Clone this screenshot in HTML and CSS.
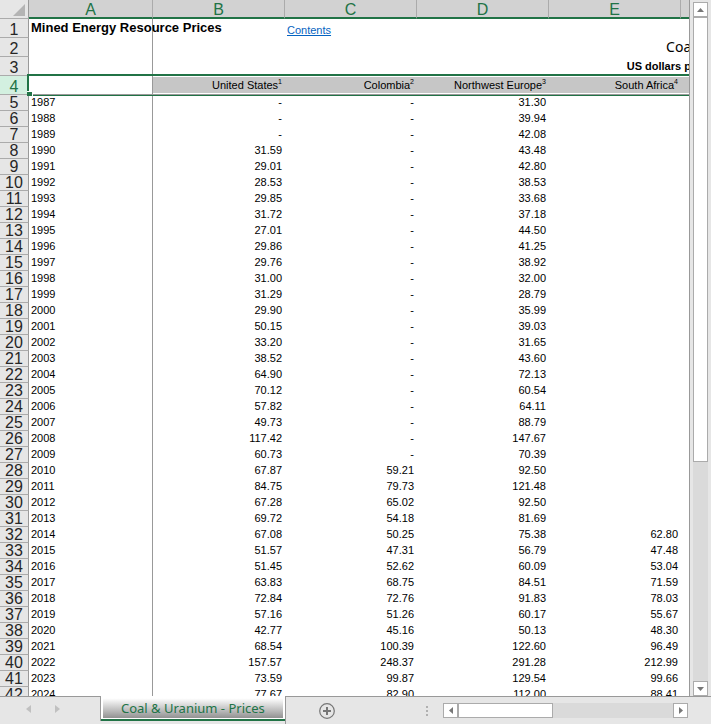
FILE: index.html
```html
<!DOCTYPE html>
<html lang="en">
<head>
    <meta charset="UTF-8">
    <meta name="viewport" content="width=device-width, initial-scale=1.0">
    <title>Coal &amp; Uranium - Prices</title>
<link rel="stylesheet" href="styles.css">
</head>
<body>

    <div id="workbook">
        <div class="main">
            <div class="sheet">
                <table>
                    <colgroup>
                        <col class="col_num"><col class="col_a"><col span="5" class="col_data">
                    </colgroup>
                    <thead>
                        <tr class="letters">
                            <th class="corner"><svg width="12" height="12" viewBox="0 0 12 12"><path d="M12 0V12H0Z" fill="#b4b4b4"/></svg></th>
                            <th>A</th><th>B</th><th>C</th><th>D</th><th>E</th><th></th>
                        </tr>
                        <tr class="top"><th>1</th><td class="title">Mined Energy Resource Prices</td><td></td><td class="link"><a href="#contents">Contents</a></td><td></td><td></td><td></td></tr>
                        <tr class="top"><th>2</th><td></td><td></td><td></td><td></td><td class="coal" colspan="2">Coal</td></tr>
                        <tr class="top"><th>3</th><td></td><td></td><td></td><td></td><td class="unit" colspan="2">US dollars per tonne</td></tr>
                        <tr class="top names"><th>4</th><td class="active"><span class="handle"></span></td><td><div>United States<sup>1</sup></div></td><td><div>Colombia<sup>2</sup></div></td><td><div>Northwest Europe<sup>3</sup></div></td><td><div>South Africa<sup>4</sup></div></td><td><div></div></td></tr>
                    </thead>
                    <tbody>
                        <tr><th>5</th><td>1987</td><td>-</td><td>-</td><td>31.30</td><td></td><td></td></tr>
                        <tr><th>6</th><td>1988</td><td>-</td><td>-</td><td>39.94</td><td></td><td></td></tr>
                        <tr><th>7</th><td>1989</td><td>-</td><td>-</td><td>42.08</td><td></td><td></td></tr>
                        <tr><th>8</th><td>1990</td><td>31.59</td><td>-</td><td>43.48</td><td></td><td></td></tr>
                        <tr><th>9</th><td>1991</td><td>29.01</td><td>-</td><td>42.80</td><td></td><td></td></tr>
                        <tr><th>10</th><td>1992</td><td>28.53</td><td>-</td><td>38.53</td><td></td><td></td></tr>
                        <tr><th>11</th><td>1993</td><td>29.85</td><td>-</td><td>33.68</td><td></td><td></td></tr>
                        <tr><th>12</th><td>1994</td><td>31.72</td><td>-</td><td>37.18</td><td></td><td></td></tr>
                        <tr><th>13</th><td>1995</td><td>27.01</td><td>-</td><td>44.50</td><td></td><td></td></tr>
                        <tr><th>14</th><td>1996</td><td>29.86</td><td>-</td><td>41.25</td><td></td><td></td></tr>
                        <tr><th>15</th><td>1997</td><td>29.76</td><td>-</td><td>38.92</td><td></td><td></td></tr>
                        <tr><th>16</th><td>1998</td><td>31.00</td><td>-</td><td>32.00</td><td></td><td></td></tr>
                        <tr><th>17</th><td>1999</td><td>31.29</td><td>-</td><td>28.79</td><td></td><td></td></tr>
                        <tr><th>18</th><td>2000</td><td>29.90</td><td>-</td><td>35.99</td><td></td><td></td></tr>
                        <tr><th>19</th><td>2001</td><td>50.15</td><td>-</td><td>39.03</td><td></td><td></td></tr>
                        <tr><th>20</th><td>2002</td><td>33.20</td><td>-</td><td>31.65</td><td></td><td></td></tr>
                        <tr><th>21</th><td>2003</td><td>38.52</td><td>-</td><td>43.60</td><td></td><td></td></tr>
                        <tr><th>22</th><td>2004</td><td>64.90</td><td>-</td><td>72.13</td><td></td><td></td></tr>
                        <tr><th>23</th><td>2005</td><td>70.12</td><td>-</td><td>60.54</td><td></td><td></td></tr>
                        <tr><th>24</th><td>2006</td><td>57.82</td><td>-</td><td>64.11</td><td></td><td></td></tr>
                        <tr><th>25</th><td>2007</td><td>49.73</td><td>-</td><td>88.79</td><td></td><td></td></tr>
                        <tr><th>26</th><td>2008</td><td>117.42</td><td>-</td><td>147.67</td><td></td><td></td></tr>
                        <tr><th>27</th><td>2009</td><td>60.73</td><td>-</td><td>70.39</td><td></td><td></td></tr>
                        <tr><th>28</th><td>2010</td><td>67.87</td><td>59.21</td><td>92.50</td><td></td><td></td></tr>
                        <tr><th>29</th><td>2011</td><td>84.75</td><td>79.73</td><td>121.48</td><td></td><td></td></tr>
                        <tr><th>30</th><td>2012</td><td>67.28</td><td>65.02</td><td>92.50</td><td></td><td></td></tr>
                        <tr><th>31</th><td>2013</td><td>69.72</td><td>54.18</td><td>81.69</td><td></td><td></td></tr>
                        <tr><th>32</th><td>2014</td><td>67.08</td><td>50.25</td><td>75.38</td><td>62.80</td><td></td></tr>
                        <tr><th>33</th><td>2015</td><td>51.57</td><td>47.31</td><td>56.79</td><td>47.48</td><td></td></tr>
                        <tr><th>34</th><td>2016</td><td>51.45</td><td>52.62</td><td>60.09</td><td>53.04</td><td></td></tr>
                        <tr><th>35</th><td>2017</td><td>63.83</td><td>68.75</td><td>84.51</td><td>71.59</td><td></td></tr>
                        <tr><th>36</th><td>2018</td><td>72.84</td><td>72.76</td><td>91.83</td><td>78.03</td><td></td></tr>
                        <tr><th>37</th><td>2019</td><td>57.16</td><td>51.26</td><td>60.17</td><td>55.67</td><td></td></tr>
                        <tr><th>38</th><td>2020</td><td>42.77</td><td>45.16</td><td>50.13</td><td>48.30</td><td></td></tr>
                        <tr><th>39</th><td>2021</td><td>68.54</td><td>100.39</td><td>122.60</td><td>96.49</td><td></td></tr>
                        <tr><th>40</th><td>2022</td><td>157.57</td><td>248.37</td><td>291.28</td><td>212.99</td><td></td></tr>
                        <tr><th>41</th><td>2023</td><td>73.59</td><td>99.87</td><td>129.54</td><td>99.66</td><td></td></tr>
                        <tr><th>42</th><td>2024</td><td>77.67</td><td>82.90</td><td>112.00</td><td>88.41</td><td></td></tr>
                    </tbody>
                </table>
            </div>
            <div class="vscroll">
                <button aria-label="Scroll up"><svg width="7" height="4" viewBox="0 0 7 4"><path d="M3.5 0L7 4H0Z"/></svg></button>
                <div class="vtrack"><div class="vthumb"></div></div>
                <button aria-label="Scroll down"><svg width="7" height="4" viewBox="0 0 7 4"><path d="M0 0H7L3.5 4Z"/></svg></button>
            </div>
        </div>

        <div class="bottom">
            <div class="nav">
                <button aria-label="Previous sheet"><svg width="5" height="8" viewBox="0 0 5 8"><path d="M5 0V8L0 4Z"/></svg></button>
                <button aria-label="Next sheet"><svg width="5" height="8" viewBox="0 0 5 8"><path d="M0 0V8L5 4Z"/></svg></button>
            </div>
            <button class="tab">Coal &amp; Uranium - Prices</button>
            <div class="rest">
                <button class="add" aria-label="New sheet"><svg width="16" height="16" viewBox="0 0 16 16"><circle cx="8" cy="8" r="7.3" fill="none" stroke="#767676" stroke-width="1.2"/><path d="M7 4H9V7H12V9H9V12H7V9H4V7H7Z" fill="#767676"/></svg></button>
                <svg class="dots" width="2" height="10" viewBox="0 0 2 10"><path d="M0 0H2V2H0ZM0 4H2V6H0ZM0 8H2V10H0Z" fill="#b0b0b0"/></svg>
                <div class="hscroll">
                    <button aria-label="Scroll left"><svg width="4" height="7" viewBox="0 0 4 7"><path d="M4 0V7L0 3.5Z"/></svg></button>
                    <div class="htrack"><div class="hthumb"></div></div>
                    <button aria-label="Scroll right"><svg width="4" height="7" viewBox="0 0 4 7"><path d="M0 0V7L4 3.5Z"/></svg></button>
                </div>
            </div>
        </div>
    </div>

</body>
</html>
```

FILE: styles.css
```css
*{
    box-sizing: border-box;
}
body{
    margin: 0;
    background-color: #e6e6e6;
    font-family: "Liberation Sans", Arial, sans-serif;
    font-size: 11px;
    color: #000;
}
button{
    padding: 0;
    border: 0;
    background: none;
    display: flex;
    align-items: center;
    justify-content: center;
}
#workbook{
    height: 100vh;
    display: flex;
    flex-direction: column;
}
.main{
    flex: 1;
    min-height: 0;
    display: flex;
}

/* grid */
.sheet{
    flex: 1;
    min-width: 0;
    overflow: hidden;
    background-color: #fff;
    border-right: 1px solid #999;
}
table{
    width: 813px;
    table-layout: fixed;
    border-collapse: separate;
    border-spacing: 0;
}
.col_num{
    width: 29px;
}
.col_a{
    width: 124px;
}
.col_data{
    width: 132px;
}
th, td{
    padding: 0 3px 0 2px;
    height: 16px;
    line-height: 15px;
    text-align: right;
    vertical-align: top;
    white-space: nowrap;
}
th{
    padding: 0;
    font-size: 16px;
    font-weight: normal;
    text-align: center;
    color: #262626;
    background-color: #e6e6e6;
    border-right: 1px solid #999;
    border-bottom: 1px solid #ababab;
}
th + td{
    text-align: left;
    border-right: 1px solid #999;
}
.letters th{
    height: 19px;
    padding-top: 3px;
    line-height: 14px;
    color: #217346;
    background-color: #d2d2d2;
    border-right: 1px solid #ababab;
    border-bottom: 2px solid #217346;
}
.letters th.corner{
    padding: 4px 3px 0 0;
    background-color: #e6e6e6;
    border-right: 1px solid #999;
    border-bottom: 1px solid #ababab;
}
.corner svg{
    display: block;
    margin-left: auto;
}
.top th, .top td{
    height: 19px;
    line-height: 18px;
}
.top th{
    padding-top: 3px;
    line-height: 15px;
}
.top td.title{
    font-size: 13px;
    font-weight: bold;
}
.top td.link{
    padding-top: 4px;
    text-align: left;
    line-height: 15px;
}
.link a{
    color: #0563c1;
}
.top td.coal{
    font-family: "Noto Sans", sans-serif;
    font-size: 14px;
    text-align: center;
}
.top td.unit{
    font-weight: bold;
    text-align: center;
}

/* selected row */
.names th{
    color: #217346;
    background-color: #d3f0e0;
}
.top.names td{
    padding: 0;
    border-bottom: 1px solid #999;
    box-shadow: 0 -2px #217346, 0 1px #217346;
}
.names div{
    height: 16px;
    margin-top: 1px;
    padding-right: 3px;
    line-height: 16px;
    background-color: #c6c6c6;
}
.names sup{
    font-size: 7px;
    line-height: 0;
}
.top.names td.active{
    position: relative;
    box-shadow: 0 -2px #217346, -2px 0 #217346, -2px -2px #217346, 0 1px #217346;
}
.handle{
    position: absolute;
    left: -2px;
    bottom: -2px;
    width: 6px;
    height: 5px;
    background-color: #217346;
    border-top: 1px solid #fff;
    border-right: 1px solid #fff;
}

/* scroll bars */
.vscroll{
    width: 21px;
    padding: 2px 3px 0;
    display: flex;
    flex-direction: column;
}
.vscroll button, .hscroll button{
    width: 15px;
    height: 15px;
    flex: none;
    background-color: #fff;
    border: 1px solid #ababab;
}
.vscroll path, .hscroll path{
    fill: #777;
}
.vtrack, .htrack{
    flex: 1;
    background-color: #dadada;
}
.vthumb{
    height: 67%;
    background-color: #fff;
    border: 1px solid #ababab;
}
.hscroll{
    width: 245px;
    display: flex;
}
.hthumb{
    width: 44%;
    height: 15px;
    background-color: #fff;
    border: 1px solid #ababab;
}

/* sheet tabs */
.bottom{
    height: 28px;
    display: flex;
}
.nav{
    width: 101px;
    height: 25px;
    padding-right: 14px;
    display: flex;
    justify-content: center;
    gap: 24px;
    border-top: 1px solid #999;
    border-right: 1px solid #999;
}
.nav path{
    fill: #c0c0c0;
}
.tab{
    height: 23px;
    padding: 0 18px;
    font-family: "Noto Sans", sans-serif;
    font-size: 13px;
    color: #217346;
    background: linear-gradient(#fff 10%, #8c8c8c);
    border: 2px solid #fff;
    border-top: 0;
    border-bottom: 0;
    box-shadow: inset 0 -1px #fff, 0 2px #217346;
}
.rest{
    flex: 1;
    padding-right: 23px;
    display: flex;
    align-items: center;
    border-top: 1px solid #999;
    border-left: 1px solid #999;
}
.add{
    margin-left: 33px;
}
.dots{
    margin-left: auto;
    margin-right: 15px;
}
```
